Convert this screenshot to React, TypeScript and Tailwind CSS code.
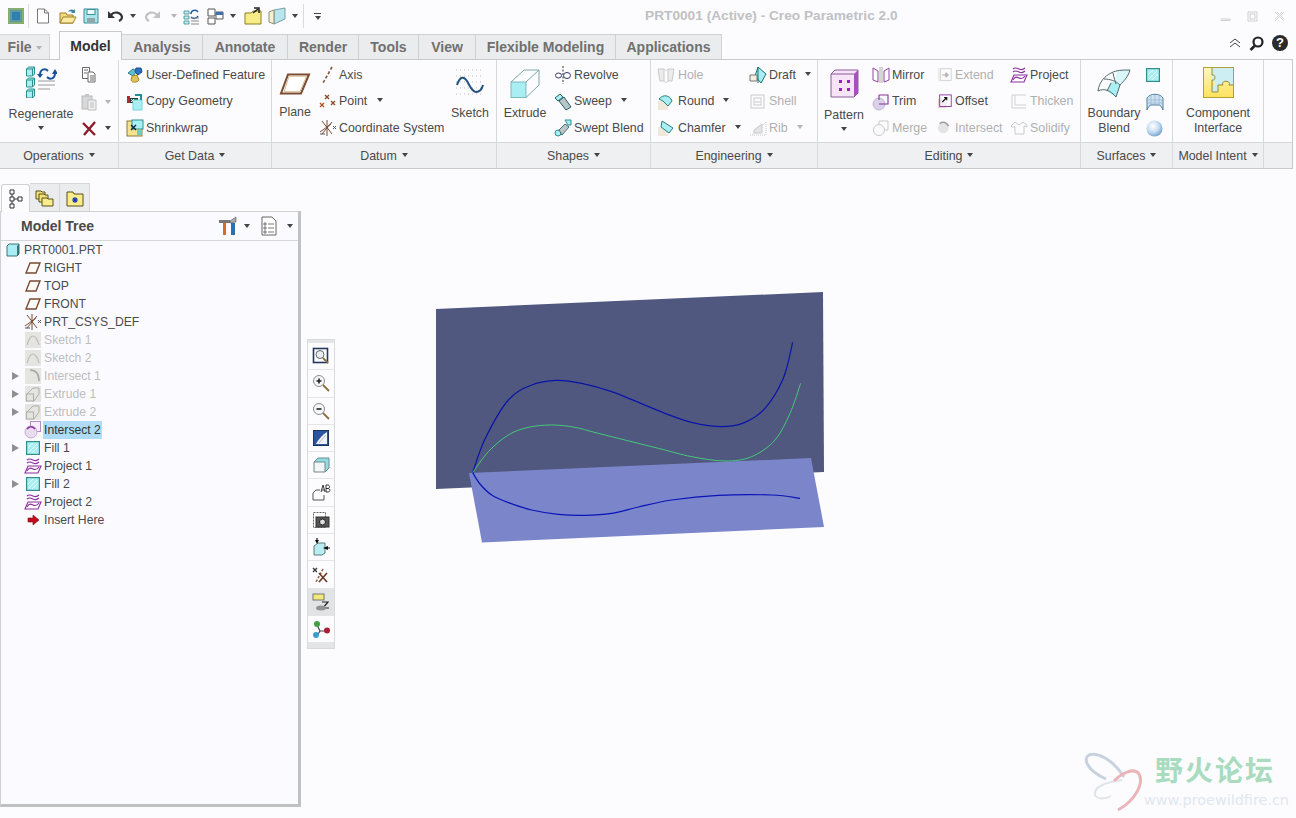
import type { ReactNode } from 'react';

// --- small helpers ---------------------------------------------------------

function Ic({ s = 18, h, vb = '0 0 18 18', children }: { s?: number; h?: number; vb?: string; children: ReactNode }) {
  return (
    <svg width={s} height={h ?? s} viewBox={vb} fill="none" className="shrink-0 block">
      {children}
    </svg>
  );
}

function Caret({ dim = false, cls = '' }: { dim?: boolean; cls?: string }) {
  return (
    <span
      className={`inline-block w-0 h-0 border-x-[3px] border-t-[4px] border-x-transparent ${dim ? 'border-t-[#b5b5b5]' : 'border-t-[#444]'} ${cls}`}
    />
  );
}

function smooth(pts: number[][]) {
  let d = `M${pts[0][0]} ${pts[0][1]}`;
  for (let i = 0; i < pts.length - 1; i++) {
    const p0 = pts[Math.max(0, i - 1)];
    const p1 = pts[i];
    const p2 = pts[i + 1];
    const p3 = pts[Math.min(pts.length - 1, i + 2)];
    const c1x = p1[0] + (p2[0] - p0[0]) / 6;
    const c1y = p1[1] + (p2[1] - p0[1]) / 6;
    const c2x = p2[0] - (p3[0] - p1[0]) / 6;
    const c2y = p2[1] - (p3[1] - p1[1]) / 6;
    d += ` C${c1x} ${c1y} ${c2x} ${c2y} ${p2[0]} ${p2[1]}`;
  }
  return d;
}

// --- icons -----------------------------------------------------------------

const brown = '#7a4a33';
const purple = '#8a2f9c';
const teal = '#2f8f8f';
const cyan = '#a8eef2';
const off = '#c9c9c9';

const PlaneIc = () => (
  <Ic>
    <path d="M6 4h10l-4 10H2z" fill="#fdfbf8" stroke={brown} strokeWidth="1.4" />
  </Ic>
);
const CsysIc = ({ s = 18 }: { s?: number }) => (
  <Ic s={s}>
    <path d="M3 2l10 13M13 3L3 15M8 1v16M1 13l11-8" stroke={brown} strokeWidth="1" />
    <path d="M14 7l3 3M17 7l-3 3M1 15h5" stroke="#555" strokeWidth="1" />
  </Ic>
);
const ProjectIc = ({ s = 18 }: { s?: number }) => (
  <Ic s={s}>
    <path d="M3 3c2-2 4-1 6 0s4 1 6-1M3 6c2-2 4-1 6 0s4 1 6-1" stroke={purple} strokeWidth="1.1" />
    <path d="M4 9h13l-3 7H1z" fill="#fff" stroke={purple} strokeWidth="1.1" />
    <path d="M3 14c2-4 4-3 6-2s4 1 6-2" stroke={purple} strokeWidth="1.1" />
  </Ic>
);
const FillIc = ({ s = 14 }: { s?: number }) => (
  <svg width={s} height={s} viewBox="0 0 14 14" fill="none" className="shrink-0 block">
    <rect x="0.6" y="0.6" width="12.8" height="12.8" fill={cyan} stroke={teal} strokeWidth="1.2" />
    <path d="M3 11l8-8M6 12l6-6M2 7l5-5" stroke="#e6fbfc" strokeWidth="1" />
  </svg>
);
const DimSketch = () => (
  <Ic>
    <rect x="1" y="1" width="16" height="16" fill="#e4e4e0" />
    <path d="M3 14c2-7 4-9 6-9s5 4 6 9" stroke="#bdbdb8" strokeWidth="1.2" />
  </Ic>
);
const DimIntersect = () => (
  <Ic>
    <rect x="1" y="1" width="16" height="16" fill="#e4e4e0" />
    <path d="M6 3c6 0 9 4 9 11" stroke="#a8a8a2" strokeWidth="1.6" />
  </Ic>
);
const DimExtrude = () => (
  <Ic>
    <rect x="1" y="1" width="16" height="16" fill="#e4e4e0" />
    <rect x="2.5" y="9" width="7" height="7" stroke="#b0b0aa" />
    <path d="M9 3h6v6M3 9l6-6M10 16l5-7" stroke="#b0b0aa" />
  </Ic>
);
const IntersectIc = () => (
  <Ic>
    <rect x="6.5" y="0.5" width="10" height="10" fill="#f6eef8" stroke="#b68cc4" />
    <circle cx="7" cy="11" r="6" fill="#e9dcef" stroke="#c8a9d4" />
    <path d="M3 8c2-3 6-3 8 0" stroke={purple} strokeWidth="1.6" />
  </Ic>
);
const RegenBig = () => (
  <Ic s={32} h={32} vb="0 0 32 32">
    {[1, 12, 23].map((y) => (
      <g key={y}>
        <path d={`M1.5 ${y + 2}l2-2h6v7l-2 2h-6z`} fill={cyan} stroke={teal} />
        <path d={`M1.5 ${y + 2}h6v7M7.5 ${y + 2}l2-2`} stroke={teal} />
      </g>
    ))}
    <path d="M15 9c0-6 5-7 8-4" stroke="#16509c" strokeWidth="2" />
    <path d="M12 8h6l-3 4z" fill="#16509c" />
    <path d="M30 7c0 6-5 7-8 4" stroke="#16509c" strokeWidth="2" />
    <path d="M27 8h6l-3-5z" fill="#16509c" />
    <path d="M13 15h17M13 19h17M13 23h12" stroke="#9a9a9a" strokeWidth="1" />
  </Ic>
);
const CopyIc = () => (
  <Ic>
    <path d="M2.5 1.5h7v11h-7z" fill="#fff" stroke="#666" />
    <path d="M8 6h5l2 2v8H8z" fill="#fff" stroke="#666" />
    <path d="M4 4h4M4 7h3M10 10h4M10 12h4M10 14h4" stroke="#666" />
  </Ic>
);
const PasteIc = () => (
  <Ic>
    <rect x="2" y="3" width="10" height="13" fill="#d6d8da" stroke="#b8b8b8" />
    <rect x="5" y="1" width="4" height="3" fill="#c5c5c5" />
    <path d="M8 7h8v10H8z" fill="#f1f1f1" stroke="#bbb" />
    <path d="M10 10h4M10 12h4M10 14h4" stroke="#bbb" />
  </Ic>
);
const DeleteIc = () => (
  <Ic>
    <path d="M3 4l12 12M15 3L4 16" stroke="#8a1c2c" strokeWidth="2.4" />
  </Ic>
);
const UdfIc = () => (
  <Ic>
    <path d="M2 7l5-4 4 2-4 5z" fill="#5fc1c9" stroke="#2a7f92" />
    <path d="M10 2h5l1 4-4 3-3-3z" fill="#2f6fc0" stroke="#1e4f8f" />
    <path d="M6 10l5-1 2 5c-2 3-7 3-8 0z" fill="#e0c25a" stroke="#a8892c" />
  </Ic>
);
const CopyGeomIc = () => (
  <Ic>
    <rect x="1" y="3" width="3" height="7" fill="#b5262a" />
    <rect x="4" y="5" width="8" height="5" fill="#1f3f42" />
    <rect x="7" y="7" width="9" height="10" fill={cyan} stroke="#79d4da" />
    <path d="M9 1h7v6h-2V3H9z" fill="#1d8f95" />
    <path d="M5 6l3 3M8 6l-3 3" stroke="#dff" />
  </Ic>
);
const ShrinkIc = () => (
  <Ic>
    <rect x="1" y="2" width="15" height="15" fill="#f3e28f" stroke="#8a7a35" />
    <rect x="6" y="1" width="11" height="9" fill={cyan} stroke="#2f8f8f" />
    <path d="M5 6l5 5M5 11l5-5" stroke="#123" strokeWidth="1.4" />
    <path d="M11 11h5v5h-5z" fill="#6cc" />
  </Ic>
);
const PlaneBig = () => (
  <Ic s={32} h={22} vb="0 0 32 22">
    <path d="M9 1.5h21l-8 19H2z" fill="#fff" stroke={brown} strokeWidth="2" />
    <path d="M10 3.2h17.5l-6.500 15.500H5.200z" stroke="#d9b98e" strokeWidth="1" />
  </Ic>
);
const AxisIc = () => (
  <Ic>
    <path d="M13 1L4 17" stroke="#8c5a3e" strokeWidth="1.7" strokeDasharray="3 2" />
  </Ic>
);
const PointIc = () => (
  <Ic>
    <path d="M6 2l4 4M10 2L6 6" stroke="#8a4a25" strokeWidth="1.3" />
    <path d="M1 10l4 4M5 10l-4 4" stroke="#b0541f" strokeWidth="1.3" />
    <path d="M12 8l4 4M16 8l-4 4" stroke="#8a4a25" strokeWidth="1.3" />
  </Ic>
);
const SketchBig = () => (
  <svg width="30" height="30" viewBox="0 0 30 30" fill="none" className="shrink-0 block">
    <path d="M1 2h28M1 8h28M1 14h28M1 20h28M1 26h28" stroke="#b9bcc4" strokeWidth="1" strokeDasharray="1 3" />
    <path d="M2 17c3-9 7-9 10-4s5 11 9 11 6-3 7-7" stroke="#24527f" strokeWidth="2" />
  </svg>
);
const ExtrudeBig = () => (
  <svg width="31" height="30" viewBox="0 0 31 30" fill="none" className="shrink-0 block">
    <rect x="1" y="13" width="15" height="15.5" fill={cyan} stroke="#7fb8bc" />
    <path d="M1 13L14 1h15M16 13L29 1v15L16 28.5" stroke="#7fa5a8" strokeWidth="1" />
  </svg>
);
const RevolveIc = () => (
  <Ic>
    <path d="M9 0v18" stroke="#333" strokeWidth="1" strokeDasharray="2 1.5" />
    <ellipse cx="4.5" cy="9.5" rx="3" ry="2.5" fill="#fff" stroke="#336" />
    <ellipse cx="13" cy="9.5" rx="3.5" ry="3" fill="#fff" stroke="#336" />
  </Ic>
);
const SweepIc = () => (
  <Ic>
    <path d="M1 5l5-4 3 3-5 4z" fill={cyan} stroke="#24606a" />
    <path d="M5 8l5-4 7 10-5 3z" fill="#b9c4c4" stroke="#24606a" />
  </Ic>
);
const SweptBlendIc = () => (
  <Ic>
    <circle cx="4" cy="14" r="3" fill={cyan} stroke={teal} />
    <path d="M5 11l6-6 4 3-7 8z" fill="#bcc6c6" stroke="#40707a" />
    <path d="M11 1h6v5h-3z" fill={cyan} stroke={teal} />
  </Ic>
);
const HoleIc = () => (
  <Ic>
    <path d="M1 3h6v12H3zM17 3h-6v12h4z" fill="#ececea" stroke={off} />
    <path d="M7 3c2 2 2 2 4 0M7 15c2 2 2 2 4 0" stroke={off} />
  </Ic>
);
const RoundIc = () => (
  <Ic>
    <path d="M1 8h5l5 5v4H1z" fill="#efe9dc" />
    <path d="M2 6c4-5 11-4 13 2l-4 5-5-5z" fill={cyan} stroke="#2c7c80" />
  </Ic>
);
const ChamferIc = () => (
  <Ic>
    <path d="M1 8h5l5 5v4H1z" fill="#efe9dc" />
    <path d="M5 2l11 7-4 5-8-6z" fill={cyan} stroke="#2c7c80" />
  </Ic>
);
const DraftIc = () => (
  <Ic>
    <path d="M9 1l8 7-5 9-6-7z" fill={cyan} stroke="#1f6f72" />
    <path d="M1 9h7v6H1z" fill="#f5f0e0" stroke="#777" />
    <path d="M9 1v16" stroke="#1f6f72" />
  </Ic>
);
const ShellIc = () => (
  <Ic>
    <rect x="2" y="2" width="13" height="13" stroke={off} />
    <rect x="5" y="5" width="7" height="7" stroke={off} />
    <path d="M6 9h5" stroke={off} />
  </Ic>
);
const RibIc = () => (
  <Ic>
    <path d="M1 16h16V3L3 16" stroke={off} strokeDasharray="1 1" />
    <path d="M5 11l8-6v9H5z" fill="#e5e5e5" stroke={off} />
  </Ic>
);
const PatternBig = () => (
  <svg width="29" height="29" viewBox="0 0 29 29" fill="none" className="shrink-0 block">
    <path d="M1 5l4-4h23v23l-4 4H1z" fill="#f8e4f8" stroke="#8a5a9a" />
    <path d="M24 5v23l4-4V1z" fill="#a94fc0" />
    <path d="M1 5h23" stroke="#8a5a9a" />
    {[9, 17].map((x) => [11, 19].map((y) => <rect key={`${x}${y}`} x={x} y={y} width="3" height="3" fill="#9a1fc0" />))}
  </svg>
);
const MirrorIc = () => (
  <Ic>
    <path d="M1 2l5 3v11l-5-2zM17 2l-5 3v11l5-2z" stroke={purple} strokeWidth="0.9" />
    <path d="M8 1v16M10 1v16" stroke="#999" strokeWidth="0.8" />
  </Ic>
);
const TrimIc = () => (
  <Ic>
    <circle cx="7" cy="11" r="6" fill="#d9d1e8" stroke="#c4b4d8" />
    <path d="M7 2h9v9H7" stroke={purple} strokeWidth="1.1" />
    <path d="M7 2v5" stroke={purple} strokeWidth="1.1" />
  </Ic>
);
const MergeIc = () => (
  <Ic>
    <path d="M7 2h9v9H7z" stroke={off} />
    <circle cx="7" cy="11" r="5.5" fill="#fafafa" stroke={off} />
  </Ic>
);
const ExtendIc = () => (
  <Ic s={16}>
    <rect x="1" y="1" width="15" height="15" fill="#ececec" />
    <rect x="4" y="2" width="12" height="13" fill="#fbfbfb" stroke="#d3d3d3" />
    <path d="M6 9h6M10 6.5L13 9l-3 2.5z" stroke="#999" />
  </Ic>
);
const OffsetIc = () => (
  <Ic s={16}>
    <rect x="1" y="5" width="10" height="11" fill="#e7d5d5" />
    <rect x="3" y="1" width="13" height="13" fill="#fff" fillOpacity="0.6" stroke={purple} />
    <path d="M6 9l5-5M8 4h3v3" stroke="#111" strokeWidth="1.3" />
  </Ic>
);
const IntersectSm = () => (
  <Ic s={16}>
    <circle cx="7" cy="9" r="6" fill="#e4e4e4" />
    <path d="M3 4c4-3 8-1 10 3" stroke="#9e9e9e" strokeWidth="1.8" />
  </Ic>
);
const ThickenIc = () => (
  <Ic>
    <path d="M2 2h14M2 2v13h14M5 2v10h11" stroke="#d0d0d0" />
  </Ic>
);
const SolidifyIc = () => (
  <Ic>
    <path d="M1 7l4-4 4 3 4-3 4 3v2l-3-1v8H5V8H2z" stroke={off} />
  </Ic>
);
const BlendBig = () => (
  <svg width="34" height="30" viewBox="0 0 34 30" fill="none" className="shrink-0 block">
    <path d="M14 14c3 0 6 1 9 3l-4 12c-4-2-7-5-9-6z" fill={cyan} />
    <path d="M23 17c4-4 8-8 10-15-5 0-9 0-13 1l-2 9z" fill="#d9f7f9" />
    <path d="M1 23C2 14 8 8 14 5s11-3 19-3c-2 7-6 11-10 15l-4 12M1 23c6-3 12-1 18 6M7 11c6 0 12 2 16 6M16 5c1 5 2 8 3 11M14 15l-4 8" stroke="#52686c" strokeWidth="1" />
  </svg>
);
const BoundaryIc = () => (
  <Ic>
    <path d="M1 5c3-5 13-5 16 0v12c-1-3-3-5-4-5H5c-1 0-3 2-4 5z" fill="#cfe0f0" stroke="#4f7fa0" />
    <path d="M2 7h14M2 10h14M5 3v10M9 2v10M13 3v10" stroke="#8fb4d0" strokeWidth="0.7" />
  </Ic>
);
const SphereIc = () => (
  <svg width="17" height="17" viewBox="0 0 17 17" className="shrink-0 block">
    <defs>
      <radialGradient id="sph" cx="0.4" cy="0.35" r="0.7">
        <stop offset="0" stopColor="#ffffff" />
        <stop offset="0.55" stopColor="#c4dcf2" />
        <stop offset="1" stopColor="#6c9ccc" />
      </radialGradient>
    </defs>
    <circle cx="8.5" cy="8.5" r="8" fill="url(#sph)" />
  </svg>
);
const PuzzleBig = () => (
  <svg width="31" height="31" viewBox="0 0 31 31" fill="none" className="shrink-0 block">
    <defs>
      <linearGradient id="pz" x1="0" y1="0" x2="0" y2="1">
        <stop offset="0" stopColor="#fff7c0" />
        <stop offset="1" stopColor="#ffe25c" />
      </linearGradient>
    </defs>
    <rect x="0.5" y="0.5" width="30" height="30" fill="url(#pz)" stroke="#b0a03a" />
    <path d="M9 1h21v17h-4c3-5-9-5-6 0h-5v7H9v-6c4 1 4-6 0-5z" fill="#cdeff3" />
    <path d="M9 1v7c4-1 4 6 0 5v12h6v-7h5c-3-5 9-5 6 0h4" stroke="#9a8a30" />
  </svg>
);

// --- ribbon parts ----------------------------------------------------------

function Row({ icon, label, dim, gap = 3 }: { icon: ReactNode; label: string; dim?: boolean; gap?: number }) {
  return (
    <div className="h-[26.5px] flex items-center whitespace-nowrap">
      <span className="w-[17px] flex justify-center" style={{ marginRight: gap }}>
        {icon}
      </span>
      <span className={dim ? 'text-[#b0b0b0]' : 'text-[#4a4a4a]'}>{label}</span>
    </div>
  );
}

function Group({ w, label, children }: { w: number; label: string; children: ReactNode }) {
  return (
    <div className="flex flex-col border-r border-[#d8d9db] shrink-0" style={{ width: w }}>
      <div className="h-[82px] flex pt-[2px]">{children}</div>
      <div className="h-[26px] pt-[1px] bg-[#eff0f2] border-t border-[#d5d6d8] flex items-center justify-center text-[#4a4a4a]">
        {label}
        <Caret cls="ml-[5px] mb-[3px]" />
      </div>
    </div>
  );
}

function Big({ w, ml, icon, lines, caret, top = 5, gap = 8 }: { w: number; ml: number; icon: ReactNode; lines: string[]; caret?: boolean; top?: number; gap?: number }) {
  return (
    <div className="flex flex-col items-center shrink-0 text-[#4a4a4a] leading-[15px]" style={{ width: w, marginLeft: ml, paddingTop: top }}>
      {icon}
      <div className="text-center whitespace-nowrap" style={{ marginTop: gap }}>
        {lines.map((l) => (
          <div key={l}>{l}</div>
        ))}
      </div>
      {caret && <Caret cls="mt-[4px]" />}
    </div>
  );
}

const RowCaret = ({ ml, dim }: { ml: number; dim?: boolean }) => (
  <span className="inline-flex" style={{ marginLeft: ml }}>
    <Caret dim={dim} cls="mb-[3px]" />
  </span>
);

function Ribbon() {
  return (
    <div className="w-[1293px] h-[110px] flex border border-[#c9cacc] border-l-0 bg-[#fcfcfe] text-[12.4px] font-['Liberation_Sans',Arial,sans-serif]">
      <Group w={119} label="Operations">
        <Big w={70} ml={6} top={4} gap={9} icon={<RegenBig />} lines={['Regenerate']} caret />
        <div className="ml-[4px] flex flex-col">
          {[<CopyIc key="c" />, <PasteIc key="p" />, <DeleteIc key="d" />].map((ic, i) => (
            <div key={i} className="h-[26.5px] flex items-center">
              <span className="w-[18px]">{ic}</span>
              {i > 0 && <Caret dim={i === 1} cls="ml-[7px]" />}
            </div>
          ))}
        </div>
      </Group>
      <Group w={153} label="Get Data">
        <div className="ml-[7px]">
          <Row icon={<UdfIc />} label="User-Defined Feature" />
          <Row icon={<CopyGeomIc />} label="Copy Geometry" />
          <Row icon={<ShrinkIc />} label="Shrinkwrap" />
        </div>
      </Group>
      <Group w={225} label="Datum">
        <Big w={32} ml={7} top={11} gap={10} icon={<PlaneBig />} lines={['Plane']} />
        <div className="ml-[8px] w-[133px]">
          <Row icon={<AxisIc />} label="Axis" />
          <div className="h-[26.5px] flex items-center">
            <span className="w-[17px] mr-[3px] flex justify-center"><PointIc /></span>
            <span className="text-[#4a4a4a]">Point</span>
            <RowCaret ml={10} />
          </div>
          <Row icon={<CsysIc />} label="Coordinate System" />
        </div>
        <Big w={38} ml={-1} top={6} gap={8} icon={<SketchBig />} lines={['Sketch']} />
      </Group>
      <Group w={154} label="Shapes">
        <Big w={44} ml={6} top={7} gap={7} icon={<ExtrudeBig />} lines={['Extrude']} />
        <div className="ml-[7px]">
          <Row icon={<RevolveIc />} label="Revolve" />
          <div className="h-[26.5px] flex items-center">
            <span className="w-[17px] mr-[3px] flex justify-center"><SweepIc /></span>
            <span className="text-[#4a4a4a]">Sweep</span>
            <RowCaret ml={9} />
          </div>
          <Row icon={<SweptBlendIc />} label="Swept Blend" />
        </div>
      </Group>
      <Group w={167} label="Engineering">
        <div className="ml-[6px] w-[92px]">
          <Row icon={<HoleIc />} label="Hole" dim gap={4} />
          <div className="h-[26.5px] flex items-center">
            <span className="w-[17px] mr-[4px] flex justify-center"><RoundIc /></span>
            <span className="text-[#4a4a4a]">Round</span>
            <RowCaret ml={8} />
          </div>
          <div className="h-[26.5px] flex items-center">
            <span className="w-[17px] mr-[4px] flex justify-center"><ChamferIc /></span>
            <span className="text-[#4a4a4a]">Chamfer</span>
            <RowCaret ml={9} />
          </div>
        </div>
        <div>
          <div className="h-[26.5px] flex items-center">
            <span className="w-[17px] mr-[3px] flex justify-center"><DraftIc /></span>
            <span className="text-[#4a4a4a]">Draft</span>
            <RowCaret ml={9} />
          </div>
          <Row icon={<ShellIc />} label="Shell" dim />
          <div className="h-[26.5px] flex items-center">
            <span className="w-[17px] mr-[3px] flex justify-center"><RibIc /></span>
            <span className="text-[#b0b0b0]">Rib</span>
            <RowCaret ml={9} dim />
          </div>
        </div>
      </Group>
      <Group w={263} label="Editing">
        <Big w={40} ml={6} top={7} gap={10} icon={<PatternBig />} lines={['Pattern']} caret />
        <div className="ml-[8px] w-[64px]">
          <Row icon={<MirrorIc />} label="Mirror" />
          <Row icon={<TrimIc />} label="Trim" />
          <Row icon={<MergeIc />} label="Merge" dim />
        </div>
        <div className="w-[74px]">
          <Row icon={<ExtendIc />} label="Extend" dim gap={2} />
          <Row icon={<OffsetIc />} label="Offset" gap={2} />
          <Row icon={<IntersectSm />} label="Intersect" dim gap={2} />
        </div>
        <div>
          <Row icon={<ProjectIc />} label="Project" />
          <Row icon={<ThickenIc />} label="Thicken" dim />
          <Row icon={<SolidifyIc />} label="Solidify" dim />
        </div>
      </Group>
      <Group w={92} label="Surfaces">
        <Big w={60} ml={3} top={6} gap={8} icon={<BlendBig />} lines={['Boundary', 'Blend']} />
        <div className="ml-[2px]">
          <div className="h-[26.5px] flex items-center"><FillIc /></div>
          <div className="h-[26.5px] flex items-center"><BoundaryIc /></div>
          <div className="h-[26.5px] flex items-center"><SphereIc /></div>
        </div>
      </Group>
      <Group w={91} label="Model Intent">
        <Big w={90} ml={0} top={5} gap={8} icon={<PuzzleBig />} lines={['Component', 'Interface']} />
      </Group>
      <div className="flex-1 flex flex-col">
        <div className="h-[82px]" />
        <div className="h-[26px] bg-[#eff0f2] border-t border-[#d5d6d8]" />
      </div>
    </div>
  );
}

// --- top rows --------------------------------------------------------------

function QuickBar() {
  return (
    <div className="h-[32px] flex items-center font-['Liberation_Sans',Arial,sans-serif]">
      <div className="w-[645px] flex items-center shrink-0">
        <span className="ml-[8px] mr-[4px]">
          <Ic s={16} vb="0 0 16 16">
            <rect width="16" height="16" fill="#86ac70" />
            <rect x="2" y="2" width="12" height="12" fill="#5b9c9c" />
            <rect x="4" y="4" width="8" height="8" fill="#2d7fb0" />
          </Ic>
        </span>
        <span className="w-px h-[24px] bg-[#dadada] mr-[7px]" />
        <span className="mr-[9px]">
          <Ic s={14} h={16} vb="0 0 14 16">
            <path d="M1.5 1h7l4 4v10h-11z" fill="#fff" stroke="#777" />
            <path d="M8.5 1v4h4" stroke="#777" />
          </Ic>
        </span>
        <span className="mr-[6px]">
          <Ic>
            <path d="M1 6h6l1 2h6v8H1z" fill="#f5dc7a" stroke="#9a7f2c" />
            <path d="M1 16l3-6h13l-3 6z" fill="#fbe99e" stroke="#9a7f2c" />
            <path d="M9 5c1-3 4-3 6-2l1-1v4h-4l1-1c-1-1-3-1-4 0z" fill="#3c8a9c" />
          </Ic>
        </span>
        <span className="mr-[8px]">
          <Ic s={16} vb="0 0 16 16">
            <path d="M1 1h14v14H1z" fill="#a9e6ea" stroke="#3b8f96" />
            <rect x="4" y="1.5" width="8" height="5" fill="#eafcfd" stroke="#3b8f96" />
            <rect x="4" y="10" width="8" height="5" fill="#8fa7aa" />
          </Ic>
        </span>
        <span className="mr-[6px]">
          <Ic s={17} vb="0 0 17 17">
            <path d="M4 7c3-4 10-3 11 2 0 2-1 3-3 4" stroke="#333" strokeWidth="2.2" />
            <path d="M1 3v7h7z" fill="#333" />
          </Ic>
        </span>
        <Caret cls="mr-[8px]" />
        <span className="mr-[10px]">
          <Ic s={17} vb="0 0 17 17">
            <path d="M13 7C10 3 3 4 2 9c0 2 1 3 3 4" stroke="#c2c2c2" strokeWidth="2.2" />
            <path d="M16 3v7H9z" fill="#c2c2c2" />
          </Ic>
        </span>
        <Caret dim cls="mr-[6px]" />
        <span className="mr-[7px]">
          <Ic s={17} vb="0 0 17 17">
            <path d="M1 3h5v3H1zM1 8h5v3H1zM1 13h5v3H1z" fill="#c3ecef" stroke="#3a8b92" strokeWidth="0.8" />
            <path d="M8 6c0-4 5-5 7-2M15 8c-1 3-5 3-7 1" stroke="#1a5aa8" strokeWidth="1.5" />
            <path d="M8 10h8M8 13h8M8 16h8" stroke="#888" />
          </Ic>
        </span>
        <span className="mr-[6px]">
          <Ic s={17} vb="0 0 17 17">
            <path d="M1 1h7v7H1zM9 4h7v7H9zM1 10h7v6H1z" fill="#fff" stroke="#555" />
            <rect x="9" y="4" width="7" height="3" fill="#3f6fb0" />
          </Ic>
        </span>
        <Caret cls="mr-[8px]" />
        <span className="mr-[6px]">
          <Ic>
            <path d="M1 6h6l2-2h8v13H1z" fill="#f6ec88" stroke="#8f7f20" />
            <path d="M10 1h5v5" stroke="#222" strokeWidth="1.5" />
            <path d="M14 2L9 6" stroke="#222" strokeWidth="1.5" />
          </Ic>
        </span>
        <span className="mr-[6px]">
          <Ic>
            <path d="M6 3l11-2v11L6 17z" fill="#b9e6ee" stroke="#7d9fa8" />
            <path d="M1 5l5-2v14l-5-2z" fill="#f1efd8" stroke="#8f8f70" />
          </Ic>
        </span>
        <Caret cls="mr-[5px]" />
        <span className="w-px h-[24px] bg-[#dadada] mr-[10px]" />
        <span className="flex flex-col items-center gap-[2px]">
          <span className="w-[7px] h-px bg-[#444]" />
          <Caret />
        </span>
      </div>
      <span className="text-[13.7px] font-bold text-[#c0c1c3] whitespace-nowrap">PRT0001 (Active) - Creo Parametric 2.0</span>
      <div className="ml-auto flex items-center gap-[16px] mr-[11px]">
        <Ic s={11} vb="0 0 11 11"><path d="M1 8h9v1.5H1z" stroke="#cfcfcf" /></Ic>
        <Ic s={11} vb="0 0 11 11"><path d="M1 1h9v9H1zM3 3h5v5H3z" stroke="#cfcfcf" /></Ic>
        <Ic s={11} vb="0 0 11 11"><path d="M1 1l9 9M10 1l-9 9M3 1l7 7M8 1L1 8" stroke="#d5d5d5" /></Ic>
      </div>
    </div>
  );
}

const TABS = [
  { label: 'Analysis', w: 81 },
  { label: 'Annotate', w: 85 },
  { label: 'Render', w: 71 },
  { label: 'Tools', w: 60 },
  { label: 'View', w: 57 },
  { label: 'Flexible Modeling', w: 140 },
  { label: 'Applications', w: 106 },
];

function TabsRow() {
  return (
    <div className="h-[27px] flex items-end text-[14px] font-bold font-['Liberation_Sans',Arial,sans-serif] text-[#707070] relative z-10">
      <div className="w-[50px] h-[25px] pt-[1px] bg-[#ebecee] border-r border-t border-[#d5d6d8] flex items-center justify-center gap-[4px]">
        File<Caret dim />
      </div>
      <div className="w-[63px] h-[29px] pt-[1px] ml-[9px] mb-[-1px] bg-[#fcfcfe] border border-b-0 border-[#c9cacc] flex items-center justify-center text-[#333]">Model</div>
      {TABS.map((t) => (
        <div key={t.label} className="h-[25px] pt-[1px] bg-[#ebecee] border-r border-t border-[#d0d1d3] flex items-center justify-center whitespace-nowrap" style={{ width: t.w }}>
          {t.label}
        </div>
      ))}
      <div className="ml-auto mr-[8px] flex items-center gap-[8px] mb-[8px]">
        <Ic s={12} h={10} vb="0 0 12 10"><path d="M1 5l5-4 5 4M1 9l5-4 5 4" stroke="#444" strokeWidth="1" /></Ic>
        <Ic s={15} vb="0 0 15 15">
          <circle cx="9" cy="6" r="4.5" stroke="#222" strokeWidth="2.2" />
          <path d="M5.5 10L1.5 14" stroke="#222" strokeWidth="2.6" />
        </Ic>
        <span className="w-[16px] h-[16px] rounded-full bg-[#2b2b2b] text-white text-[13px] leading-[16px] text-center font-bold">?</span>
      </div>
    </div>
  );
}

// --- model tree ------------------------------------------------------------

type TreeRow = { label: string; icon: ReactNode; dim?: boolean; expand?: boolean; selected?: boolean };

const TREE: TreeRow[] = [
  { label: 'RIGHT', icon: <PlaneIc /> },
  { label: 'TOP', icon: <PlaneIc /> },
  { label: 'FRONT', icon: <PlaneIc /> },
  { label: 'PRT_CSYS_DEF', icon: <CsysIc /> },
  { label: 'Sketch 1', icon: <DimSketch />, dim: true },
  { label: 'Sketch 2', icon: <DimSketch />, dim: true },
  { label: 'Intersect 1', icon: <DimIntersect />, dim: true, expand: true },
  { label: 'Extrude 1', icon: <DimExtrude />, dim: true, expand: true },
  { label: 'Extrude 2', icon: <DimExtrude />, dim: true, expand: true },
  { label: 'Intersect 2', icon: <IntersectIc />, selected: true },
  { label: 'Fill 1', icon: <FillIc />, expand: true },
  { label: 'Project 1', icon: <ProjectIc /> },
  { label: 'Fill 2', icon: <FillIc />, expand: true },
  { label: 'Project 2', icon: <ProjectIc /> },
  {
    label: 'Insert Here',
    icon: (
      <Ic s={13} h={12} vb="0 0 13 12">
        <path d="M1 4h5V1l6 5-6 5V8H1z" fill="#c40d1c" stroke="#7c0b14" strokeWidth="0.6" />
      </Ic>
    ),
  },
];

function ModelTree() {
  return (
    <div className="w-[302px] shrink-0 pt-[14px] flex flex-col font-['Liberation_Sans',Arial,sans-serif]">
      <div className="flex h-[28px] items-end pl-[1px]">
        <div className="w-[29px] h-[28px] bg-[#fcfcfe] border border-b-0 border-[#cfd0d2] rounded-t-[3px] flex items-center justify-center mb-[-1px] z-10">
          <Ic s={15} h={20} vb="0 0 15 20">
            <path d="M2 1h4v4H2zM2 8h4v4H2zM2 15h4v4H2zM10 8h4v4h-4zM4 5v3M4 12v3M6 10h4" stroke="#333" strokeWidth="1" />
          </Ic>
        </div>
        <div className="w-[30px] h-[28px] bg-[#ebecee] border-r border-t border-[#d5d6d8] flex items-center justify-center">
          <Ic s={19} vb="0 0 19 19">
            <path d="M1 3h5l1 1h3v7H1z" fill="#f3e27a" stroke="#5a5018" />
            <path d="M4 6h5l1 1h3v7H4z" fill="#f3e27a" stroke="#5a5018" />
            <path d="M7 10h5l1 1h5v7H7z" fill="#f8ec8c" stroke="#5a5018" />
          </Ic>
        </div>
        <div className="w-[30px] h-[28px] bg-[#ebecee] border-r border-t border-[#d5d6d8] flex items-center justify-center">
          <Ic s={18} vb="0 0 18 18">
            <path d="M1 3h6l1 2h9v12H1z" fill="#f8ec8c" stroke="#5a5018" />
            <path d="M9 8v6M6 11h6M7 9l4 4M11 9l-4 4" stroke="#1438b0" strokeWidth="1.1" />
          </Ic>
        </div>
      </div>
      <div className="w-[301px] h-[596px] border border-[#cfd0d2] border-r-[3px] border-b-[3px] border-r-[#c0c1c3] border-b-[#c0c1c3] bg-[#fbfbff]">
        <div className="h-[29px] flex items-center border-b border-[#d5d6d8]">
          <span className="ml-[20px] text-[14px] font-bold text-[#4a4a4a]">Model Tree</span>
          <span className="ml-auto">
            <Ic s={20} vb="0 0 20 20">
              <path d="M1 4h11v3H1z" fill="#777" />
              <rect x="5" y="7" width="3" height="12" fill="#d76c28" />
              <rect x="13" y="7" width="4" height="12" fill="#2b6fae" />
              <path d="M12 5l6-4v5l-6 1z" fill="#aaa" stroke="#555" strokeWidth="0.6" />
            </Ic>
          </span>
          <Caret cls="ml-[6px] mr-[11px]" />
          <Ic s={16} h={20} vb="0 0 16 20">
            <path d="M1 1h10l4 4v14H1z" fill="#fff" stroke="#666" />
            <path d="M3 7h2v2H3zM3 11h2v2H3zM3 15h2v2H3zM7 8h6M7 12h6M7 16h6" stroke="#555" strokeWidth="0.8" />
          </Ic>
          <Caret cls="ml-[10px] mr-[5px]" />
        </div>
        <div className="text-[12.2px]">
          <div className="h-[18px] flex items-center">
            <span className="ml-[5px] mr-[4px]">
              <Ic s={14} vb="0 0 14 14">
                <path d="M1 3l2-2h10v10l-2 2H1z" fill={cyan} stroke="#3a7478" />
                <path d="M11 3v10l2-2V1z" fill="#3a7478" />
              </Ic>
            </span>
            <span className="text-[#4a4a4a]">PRT0001.PRT</span>
          </div>
          {TREE.map((row) => (
            <div key={row.label} className="h-[18px] flex items-center">
              <span className="w-[23px] flex justify-end pr-[5px]">
                {row.expand && <span className="w-0 h-0 border-y-[4.5px] border-l-[7px] border-y-transparent border-l-[#8f8f8f]" />}
              </span>
              <span className="w-[18px] flex justify-center">{row.icon}</span>
              <span className={`ml-[1px] px-[1px] leading-[18px] ${row.dim ? 'text-[#bdbdbd]' : 'text-[#4a4a4a]'} ${row.selected ? 'bg-[#b0dcf7] text-[#333]' : ''}`}>
                {row.label}
              </span>
            </div>
          ))}
        </div>
      </div>
    </div>
  );
}

// --- graphics area ---------------------------------------------------------

const BTNS: ReactNode[] = [
  <Ic key="refit">
    <rect x="1.5" y="1.5" width="14" height="14" fill="#fff" stroke="#23375c" strokeWidth="1.6" />
    <circle cx="8" cy="7.5" r="4" fill="#e9eef2" stroke="#666" />
    <path d="M11 11l5 5" stroke="#8a7040" strokeWidth="1.8" />
  </Ic>,
  <Ic key="in">
    <circle cx="7" cy="7" r="5.5" fill="#f4f6f8" stroke="#8a8f92" />
    <path d="M4.5 7h5M7 4.5v5" stroke="#222" strokeWidth="1.6" />
    <path d="M11 11l6 6" stroke="#8a7040" strokeWidth="1.8" />
  </Ic>,
  <Ic key="out">
    <circle cx="7" cy="7" r="5.5" fill="#f4f6f8" stroke="#8a8f92" />
    <path d="M4.5 7h5" stroke="#222" strokeWidth="1.6" />
    <path d="M11 11l6 6" stroke="#8a7040" strokeWidth="1.8" />
  </Ic>,
  <Ic key="repaint">
    <rect x="1.5" y="1.5" width="15" height="15" fill="#2b55a0" stroke="#1e3560" />
    <path d="M4 15c2-4 6-9 11-12v12z" fill="#eef2f6" />
    <path d="M7 14l7-8" stroke="#bbb" />
  </Ic>,
  <Ic key="cube">
    <path d="M2 6l4-4h11v10l-4 4z" fill="#8fdce4" stroke="#6e8c90" />
    <path d="M2 6h11v10H2z" fill="#f4f6f6" stroke="#6e8c90" />
  </Ic>,
  <Ic key="saved" s={19} vb="0 0 19 19">
    <path d="M1 10l3-3h4M1 10v7h11v-5" stroke="#555" />
    <path d="M9 9l2-7 2 7M10 7h2M14 2v7h2c2.500 0 2.500-3.500 0-3.500h-2M14 5.500h2c2 0 2-3.500 0-3.500h-2" stroke="#222" strokeWidth="0.9" />
  </Ic>,
  <Ic key="cam">
    <rect x="1.5" y="1.5" width="12" height="15" fill="#fff" stroke="#666" strokeDasharray="2 1" />
    <rect x="4" y="6" width="13" height="10" fill="#555" stroke="#333" />
    <circle cx="10.5" cy="11" r="3" fill="#ddd" stroke="#222" />
  </Ic>,
  <Ic key="spin">
    <path d="M2 8l4-3h7v10l-3 2H2z" fill="#b8eef2" stroke="#5c7c80" />
    <path d="M3 2h4L5 6zM16 8v4l-5-2z" fill="#111" />
    <path d="M5 0v3M13 10h5" stroke="#111" strokeWidth="1.2" />
  </Ic>,
  <Ic key="csys">
    <path d="M1 2l4 4M5 2L1 6" stroke="#333" strokeWidth="1.2" />
    <path d="M11 3l-7 13" stroke="#8c5a3e" strokeWidth="1.5" strokeDasharray="2.5 1.5" />
    <path d="M7 7l8 9M15 7l-8 9" stroke="#6b3a22" strokeWidth="1.6" />
  </Ic>,
  <Ic key="active">
    <rect x="1" y="1" width="11" height="6" fill="#f2ea75" stroke="#777" />
    <path d="M10 9h6l-5 6h6" stroke="#222" strokeWidth="1.2" />
    <ellipse cx="9" cy="15" rx="5" ry="2.500" fill="#8f9496" />
  </Ic>,
  <Ic key="last">
    <path d="M5 5l3 6h9M5 16l3-5" stroke="#444" strokeWidth="1.2" />
    <circle cx="5" cy="4" r="3" fill="#3fa045" />
    <circle cx="15" cy="10.5" r="3" fill="#a82036" />
    <circle cx="4" cy="15" r="3" fill="#3c9ed0" />
  </Ic>,
];

function MiniToolbar() {
  return (
    <div className="absolute left-[5px] top-[170px] w-[28px] border border-[#d9dadc] bg-[#fcfcfe] flex flex-col">
      <div className="h-[3px] bg-[#e4e5e7]" />
      {BTNS.map((b, i) => (
        <div key={i} className={`h-[27.3px] flex items-center justify-center border-b border-[#e4e5e7] ${i === 9 ? 'bg-[#e2e3e5] border border-[#b9babc]' : ''}`}>
          {b}
        </div>
      ))}
      <div className="h-[5px] bg-[#e4e5e7]" />
    </div>
  );
}

// curve points, read off a 3x crop that starts at 425,285
const crop = (pts: number[][]) => pts.map(([x, y]) => [425 + x / 3, 285 + y / 3]);

const BLUE_TOP = crop([[143, 563], [180, 462], [250, 345], [320, 300], [395, 286], [470, 295], [560, 320], [720, 385], [800, 412], [890, 425], [960, 412], [1020, 370], [1075, 280], [1103, 172]]);
const GREEN = crop([[143, 563], [190, 500], [250, 450], [310, 427], [380, 420], [450, 427], [520, 445], [700, 490], [800, 515], [900, 528], [980, 515], [1050, 465], [1095, 385], [1127, 295]]);
const BLUE_LOW = crop([[143, 563], [165, 597], [200, 630], [250, 653], [320, 675], [400, 688], [480, 691], [560, 685], [640, 666], [740, 645], [880, 631], [1040, 630], [1125, 640]]);

function Canvas() {
  return (
    <div className="relative flex-1">
      <svg viewBox="302 169 994 649" className="w-full h-full block">
        <polygon points="436,309 823,292 824,472 436,489" fill="#50587f" />
        <polygon points="469,473 811,458 824,527 482,542.5" fill="#7a86c9" />
        <path d={smooth(BLUE_TOP)} fill="none" stroke="#0a14a8" strokeWidth="1.2" />
        <path d={smooth(GREEN)} fill="none" stroke="#46c878" strokeWidth="1" />
        <path d={smooth(BLUE_LOW)} fill="none" stroke="#0a14b8" strokeWidth="1.2" />
      </svg>
      <MiniToolbar />
      {/* forum watermark */}
      <div className="absolute right-[8px] bottom-[6px] flex items-start">
        <svg width="60" height="62" viewBox="0 0 60 62" fill="none" className="block">
          <path d="M40 27C28 8 12 2 5 5-1 8 2 20 22 29" stroke="#c8d2de" strokeWidth="3" />
          <path d="M38 30C22 32 9 37 11 45c2 5 11 4 16 1" stroke="#dfe4ea" strokeWidth="2" />
          <path d="M30 31c8-8 20-14 25-7 5 9-3 26-21 36" stroke="#eab4b8" strokeWidth="3" />
        </svg>
        <div className="w-[144px] flex flex-col">
          <span className="pl-[11px] pt-[2px] text-[28px] leading-[34px] font-bold tracking-[2px] text-[#a9dcbf] whitespace-nowrap font-['Noto_Sans_CJK_SC',sans-serif]">野火论坛</span>
          <span className="mt-[6px] text-[14.4px] leading-[16px] text-[#e0e7ee] whitespace-nowrap font-['DejaVu_Sans',sans-serif]">www.proewildfire.cn</span>
        </div>
      </div>
    </div>
  );
}

export default function App() {
  return (
    <div className="w-[1296px] h-[818px] overflow-hidden flex flex-col bg-[#fcfcfe]">
      <QuickBar />
      <TabsRow />
      <Ribbon />
      <div className="flex-1 flex min-h-0">
        <ModelTree />
        <Canvas />
      </div>
    </div>
  );
}
